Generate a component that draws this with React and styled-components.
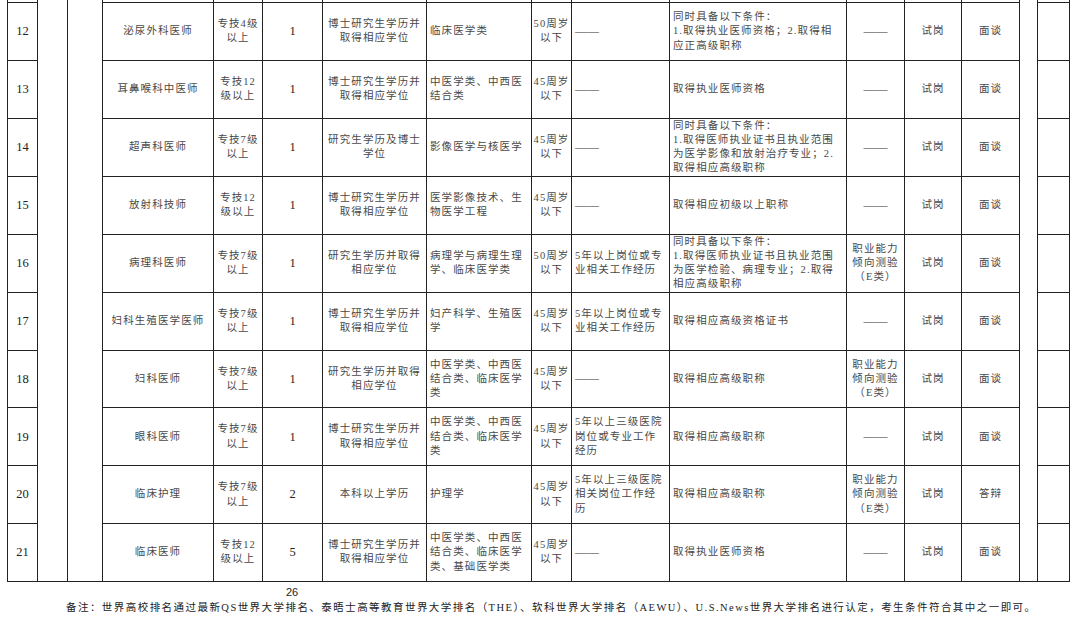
import React from "react";
import styled, { createGlobalStyle } from "styled-components";

const Global = createGlobalStyle`
  html, body { margin: 0; padding: 0; background: #fff; }
  body { font-family: "Liberation Serif", "Noto Sans CJK SC", serif; }
`;

const COLS = [30, 30, 35, 111, 49, 60, 104, 105, 40, 98, 177, 58, 57, 58, 18, 32];
const DASH = "——";

const ROWS = [
  ["12", "泌尿外科医师", "专技4级\n以上", "1", "博士研究生学历并\n取得相应学位", "临床医学类", "50周岁\n以下", DASH, "同时具备以下条件：\n1.取得执业医师资格；2.取得相\n应正高级职称", DASH, "试岗", "面谈"],
  ["13", "耳鼻喉科中医师", "专技12\n级以上", "1", "博士研究生学历并\n取得相应学位", "中医学类、中西医\n结合类", "45周岁\n以下", DASH, "取得执业医师资格", DASH, "试岗", "面谈"],
  ["14", "超声科医师", "专技7级\n以上", "1", "研究生学历及博士\n学位", "影像医学与核医学", "45周岁\n以下", DASH, "同时具备以下条件：\n1.取得医师执业证书且执业范围\n为医学影像和放射治疗专业；2.\n取得相应高级职称", DASH, "试岗", "面谈"],
  ["15", "放射科技师", "专技12\n级以上", "1", "博士研究生学历并\n取得相应学位", "医学影像技术、生\n物医学工程", "45周岁\n以下", DASH, "取得相应初级以上职称", DASH, "试岗", "面谈"],
  ["16", "病理科医师", "专技7级\n以上", "1", "研究生学历并取得\n相应学位", "病理学与病理生理\n学、临床医学类", "50周岁\n以下", "5年以上岗位或专\n业相关工作经历", "同时具备以下条件：\n1.取得医师执业证书且执业范围\n为医学检验、病理专业；2.取得\n相应高级职称", "职业能力\n倾向测验\n（E类）", "试岗", "面谈"],
  ["17", "妇科生殖医学医师", "专技7级\n以上", "1", "博士研究生学历并\n取得相应学位", "妇产科学、生殖医\n学", "45周岁\n以下", "5年以上岗位或专\n业相关工作经历", "取得相应高级资格证书", DASH, "试岗", "面谈"],
  ["18", "妇科医师", "专技7级\n以上", "1", "研究生学历并取得\n相应学位", "中医学类、中西医\n结合类、临床医学\n类", "45周岁\n以下", DASH, "取得相应高级职称", "职业能力\n倾向测验\n（E类）", "试岗", "面谈"],
  ["19", "眼科医师", "专技7级\n以上", "1", "博士研究生学历并\n取得相应学位", "中医学类、中西医\n结合类、临床医学\n类", "45周岁\n以下", "5年以上三级医院\n岗位或专业工作\n经历", "取得相应高级职称", DASH, "试岗", "面谈"],
  ["20", "临床护理", "专技7级\n以上", "2", "本科以上学历", "护理学", "45周岁\n以下", "5年以上三级医院\n相关岗位工作经\n历", "取得相应高级职称", "职业能力\n倾向测验\n（E类）", "试岗", "答辩"],
  ["21", "临床医师", "专技12\n级以上", "5", "博士研究生学历并\n取得相应学位", "中医学类、中西医\n结合类、临床医学\n类、基础医学类", "45周岁\n以下", DASH, "取得执业医师资格", DASH, "试岗", "面谈"],
];

const Page = styled.div`
  width: 1080px;
  height: 628px;
  overflow: hidden;
  display: flex;
  flex-direction: column;
`;

const Table = styled.table`
  table-layout: fixed;
  border-collapse: collapse;
  width: 1062px;
  margin-left: 7px;
`;

const SliverRow = styled.tr`
  height: 2px;
`;

const Row = styled.tr`
  height: 57.8px;
`;

const Cell = styled.td`
  border: 1px solid #222;
  padding: 0 ${(p) => (p.$tight ? "1px" : "3px")};
  text-align: ${(p) => p.$align || "center"};
  vertical-align: middle;
  white-space: pre-line;
  font-family: "Liberation Serif", "Noto Sans CJK SC", serif;
  font-size: 10.5px;
  letter-spacing: 1.1px;
  line-height: 14.3px;
  color: #484848;
  overflow: hidden;
`;

const NumCell = styled(Cell)`
  font-size: 12.5px;
  letter-spacing: 0;
  color: #222;
`;

const Dash = styled.span`
  font-family: "Liberation Serif", serif;
  font-size: 12px;
  letter-spacing: 0;
  color: #333;
`;

const SliverCell = styled.td`
  border-left: 1px solid #222;
  border-right: 1px solid #222;
  border-bottom: 1px solid #222;
  padding: 0;
  font-size: 0;
  line-height: 0;
  height: 2px;
`;

const MergedCell = styled.td`
  border-left: 1px solid #222;
  border-right: 1px solid #222;
  border-bottom: 1px solid #222;
  padding: 0;
`;

const PageNo = styled.div`
  font-family: "Liberation Sans", Arial, sans-serif;
  font-size: 11px;
  line-height: 14px;
  color: #222;
  padding-left: 286px;
  margin-top: 3px;
`;

const Note = styled.div`
  font-family: "Liberation Serif", "Noto Sans CJK SC", serif;
  font-size: 10.5px;
  letter-spacing: 1.45px;
  line-height: 14px;
  color: #222;
  padding-left: 66px;
  margin-top: 2px;
  white-space: nowrap;
`;

const show = (t) => (t === DASH ? <Dash>{DASH}</Dash> : t);

export default function App() {
  return (
    <Page>
      <Global />
      <Table>
        <colgroup>
          {COLS.map((w, i) => (
            <col key={i} style={{ width: w }} />
          ))}
        </colgroup>
        <tbody>
          <SliverRow>
            <SliverCell />
            <MergedCell rowSpan={11} />
            <MergedCell rowSpan={11} />
            {Array.from({ length: 11 }).map((_, i) => (
              <SliverCell key={i} />
            ))}
            <MergedCell rowSpan={11} />
            <SliverCell />
          </SliverRow>
          {ROWS.map((r) => (
            <Row key={r[0]}>
              <NumCell>{r[0]}</NumCell>
              <Cell>{r[1]}</Cell>
              <Cell $tight>{r[2]}</Cell>
              <NumCell>{r[3]}</NumCell>
              <Cell>{r[4]}</Cell>
              <Cell $align="left">{r[5]}</Cell>
              <Cell $tight>{r[6]}</Cell>
              <Cell $align="left">{show(r[7])}</Cell>
              <Cell $align="left">{r[8]}</Cell>
              <Cell>{show(r[9])}</Cell>
              <Cell>{r[10]}</Cell>
              <Cell>{r[11]}</Cell>
              <Cell />
            </Row>
          ))}
        </tbody>
      </Table>
      <PageNo>26</PageNo>
      <Note>
        备注：世界高校排名通过最新QS世界大学排名、泰晤士高等教育世界大学排名（THE）、软科世界大学排名（AEWU）、U.S.News世界大学排名进行认定，考生条件符合其中之一即可。
      </Note>
    </Page>
  );
}
